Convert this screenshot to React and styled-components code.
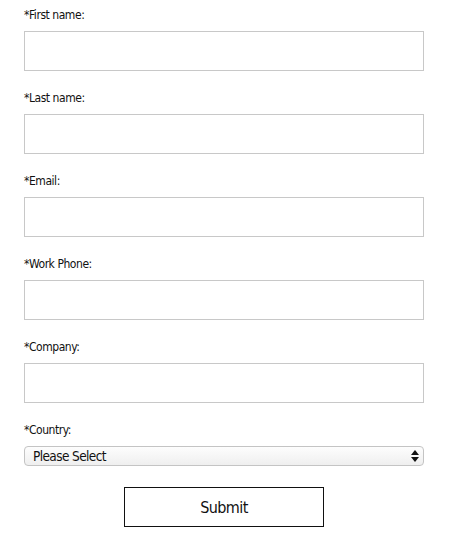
import React from 'react'
import styled, { createGlobalStyle } from 'styled-components'

const FONT = `"DejaVu Sans Condensed", "DejaVu Sans", sans-serif`

const Global = createGlobalStyle`
  body {
    margin: 0;
    background: #fff;
    font-family: ${FONT};
    color: #111;
  }
`

const Form = styled.form`
  width: 400px;
  padding: 6px 0 0 24px;
  display: flex;
  flex-direction: column;
`

const Field = styled.div`
  display: flex;
  flex-direction: column;
  margin-bottom: ${p => (p.last ? '21px' : '18px')};
`

const Label = styled.label`
  font-size: 12px;
  letter-spacing: -0.45px;
  line-height: 18px;
  margin-bottom: 7px;
`

const Input = styled.input`
  box-sizing: border-box;
  width: 400px;
  height: 40px;
  border: 1px solid #c8c8c8;
  border-radius: 0;
  padding: 0 8px;
  font: inherit;
  outline: none;
`

const SelectWrap = styled.div`
  position: relative;
  width: 400px;
  height: 20px;
`

const Select = styled.select`
  appearance: none;
  box-sizing: border-box;
  width: 100%;
  height: 20px;
  border: 1px solid #c4c4c4;
  border-radius: 4px;
  background: linear-gradient(#fdfdfd, #efefef);
  padding: 0 0 0 8px;
  font-family: ${FONT};
  font-size: 13.5px;
  letter-spacing: -0.6px;
  color: #111;
  outline: none;
`

const Arrows = styled.svg`
  position: absolute;
  right: 5px;
  top: 4px;
  pointer-events: none;
`

const Submit = styled.button`
  align-self: center;
  width: 200px;
  height: 40px;
  background: #fff;
  border: 1px solid #111;
  border-radius: 0;
  font-family: ${FONT};
  font-size: 16px;
  letter-spacing: -0.6px;
  color: #111;
  cursor: pointer;
`

const fields = ['First name', 'Last name', 'Email', 'Work Phone', 'Company']

export default function App() {
  return (
    <>
      <Global />
      <Form onSubmit={e => e.preventDefault()}>
        {fields.map(f => (
          <Field key={f}>
            <Label>*{f}:</Label>
            <Input type="text" />
          </Field>
        ))}
        <Field last>
          <Label>*Country:</Label>
          <SelectWrap>
            <Select defaultValue="">
              <option value="">Please Select</option>
            </Select>
            <Arrows width="8" height="12" viewBox="0 0 8 12">
              <path d="M4 0 L8 5 L0 5 Z" fill="#111" />
              <path d="M0 7 L8 7 L4 12 Z" fill="#111" />
            </Arrows>
          </SelectWrap>
        </Field>
        <Submit type="submit">Submit</Submit>
      </Form>
    </>
  )
}
